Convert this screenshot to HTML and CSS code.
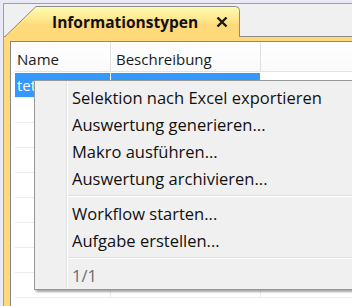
FILE: index.html
```html
<!DOCTYPE html>
<html lang="de">
<head>
    <meta charset="UTF-8">
    <title>Informationstypen</title>
    <link rel="stylesheet" href="styles.css">
</head>
<body>

<div class="window">
    <div class="tabstrip">
        <div class="tab">
            <svg class="tab-shape" width="236" height="33" viewBox="0 0 236 33">
                <defs>
                    <linearGradient id="tabFill" x1="0" y1="0" x2="0" y2="1">
                        <stop offset="0" stop-color="#fffbb0"/>
                        <stop offset="0.35" stop-color="#ffec95"/>
                        <stop offset="0.6" stop-color="#ffda7c"/>
                        <stop offset="1" stop-color="#ffd97a"/>
                    </linearGradient>
                </defs>
                <path d="M0.5 33 L32 2.5 H231.5 Q235.5 2.5 235.5 6.5 V33 Z" fill="url(#tabFill)"/>
                <path d="M0.5 33 L32 2.5 H231.5 Q235.5 2.5 235.5 6.5 V33" fill="none" stroke="#8a8a8a" stroke-width="1"/>
            </svg>
            <span class="tab-title">Informationstypen</span>
            <svg class="tab-close" width="12" height="12" viewBox="0 0 12 12">
                <path d="M1.5 1.5 L10.5 10.5 M10.5 1.5 L1.5 10.5" stroke="#1a1a1a" stroke-width="2.4" stroke-linecap="butt"/>
            </svg>
        </div>
    </div>

    <div class="pane">
        <div class="panel">
            <div class="grid">
                <div class="row head">
                    <div class="cell c1">Name</div>
                    <div class="cell c2">Beschreibung</div>
                    <div class="cell c3"></div>
                </div>
                <div class="row selected">
                    <div class="cell c1">tet</div>
                    <div class="cell c2"></div>
                    <div class="cell c3"></div>
                </div>
                <div class="row"><div class="cell c1"></div><div class="cell c2"></div><div class="cell c3"></div></div>
                <div class="row"><div class="cell c1"></div><div class="cell c2"></div><div class="cell c3"></div></div>
                <div class="row"><div class="cell c1"></div><div class="cell c2"></div><div class="cell c3"></div></div>
                <div class="row"><div class="cell c1"></div><div class="cell c2"></div><div class="cell c3"></div></div>
                <div class="row"><div class="cell c1"></div><div class="cell c2"></div><div class="cell c3"></div></div>
                <div class="row"><div class="cell c1"></div><div class="cell c2"></div><div class="cell c3"></div></div>
                <div class="row"><div class="cell c1"></div><div class="cell c2"></div><div class="cell c3"></div></div>
                <div class="row"><div class="cell c1"></div><div class="cell c2"></div><div class="cell c3"></div></div>
            </div>
        </div>
    </div>
</div>

<!-- Kontextmenü -->
<div class="menu">
    <div class="menu-item">Selektion nach Excel exportieren</div>
    <div class="menu-item">Auswertung generieren...</div>
    <div class="menu-item">Makro ausführen...</div>
    <div class="menu-item">Auswertung archivieren...</div>
    <div class="menu-sep"></div>
    <div class="menu-item">Workflow starten...</div>
    <div class="menu-item">Aufgabe erstellen...</div>
    <div class="menu-sep"></div>
    <div class="menu-item disabled">1/1</div>
</div>

</body>
</html>
```

FILE: styles.css
```css
/* Grundlayout */
body {
    margin: 0;
    width: 352px;
    height: 306px;
    overflow: hidden;
    background: #eaeaf6;
    font-family: 'Open Sans', 'Noto Sans', sans-serif;
    font-size: 15px;
    color: #1a1a1a;
    position: relative;
}
.window {
    margin: 3px 0 0 3px;
    width: 349px;
    height: 303px;
    overflow: hidden;
    box-sizing: border-box;
    border-top: 1px solid #a0a0a0;
    border-left: 1px solid #a0a0a0;
    background: #f0f0f0;
}

/* Reiter */
.tabstrip {
    display: flex;
    height: 33px;
    box-shadow: inset 0 -1px #8a8a8a;
}
.tab {
    position: relative;
    flex: 0 0 236px;
    height: 33px;
    display: flex;
    align-items: center;
}
.tab-shape {
    position: absolute;
    left: 0;
    top: 0;
}
.tab-title {
    position: relative;
    margin-left: 48px;
    margin-top: 2px;
    font-weight: 700;
    font-size: 15.5px;
    color: #111;
    white-space: nowrap;
}
.tab-close {
    position: relative;
    flex-shrink: 0;
    margin-left: 18px;
    margin-top: 3px;
}

/* Bereich mit Tabelle */
.pane {
    background: #ffd97a;
    padding: 4px 0 0 6px;
    height: 300px;
}
.panel {
    height: 100%;
    background: #fff;
    border-top: 1px solid #828790;
    border-left: 1px solid #828790;
    padding-left: 4px;
}
.row {
    display: flex;
    height: 24px;
    border-bottom: 1px solid #ececec;
}
.row.head {
    height: 29px;
    margin-bottom: 1px;
    border-bottom: 1px solid #e3e3e3;
    background: linear-gradient(#ffffff, #fafafa);
}
.cell {
    box-sizing: border-box;
    padding-left: 2px;
    line-height: 24px;
    white-space: nowrap;
    overflow: hidden;
}
.head .cell {
    line-height: 20px;
    padding-top: 7px;
}
.c1 {
    width: 96px;
    border-right: 1px solid #ececec;
}
.c2 {
    width: 150px;
    border-right: 1px solid #ececec;
    padding-left: 5px;
}
.c3 {
    flex: 1;
}
.head .c1,
.head .c2 {
    border-right-color: #e0e0e0;
}
.selected .c1,
.selected .c2 {
    background: #3399ff;
    color: #fff;
    border-right-color: #fff;
}

/* Kontextmenü */
.menu {
    position: absolute;
    left: 34px;
    top: 80px;
    width: 318px;
    padding-top: 3px;
    background: #f0f0f0;
    border: 1px solid #979797;
    box-shadow: 2px 2px 2px rgba(0, 0, 0, 0.35);
    font-size: 16.5px;
}
.menu::before {
    content: '';
    position: absolute;
    left: 31px;
    top: 0;
    bottom: 0;
    width: 1px;
    background: #e2e3e3;
    box-shadow: 1px 0 #fff;
}
.menu-item {
    height: 27px;
    line-height: 27px;
    padding-left: 37px;
    color: #111;
    white-space: nowrap;
}
.menu-item.disabled {
    color: #6d6d6d;
}
.menu-sep {
    margin: 3px 0 3px 32px;
    height: 1px;
    background: #e0e0e0;
    border-bottom: 1px solid #fff;
}
```
